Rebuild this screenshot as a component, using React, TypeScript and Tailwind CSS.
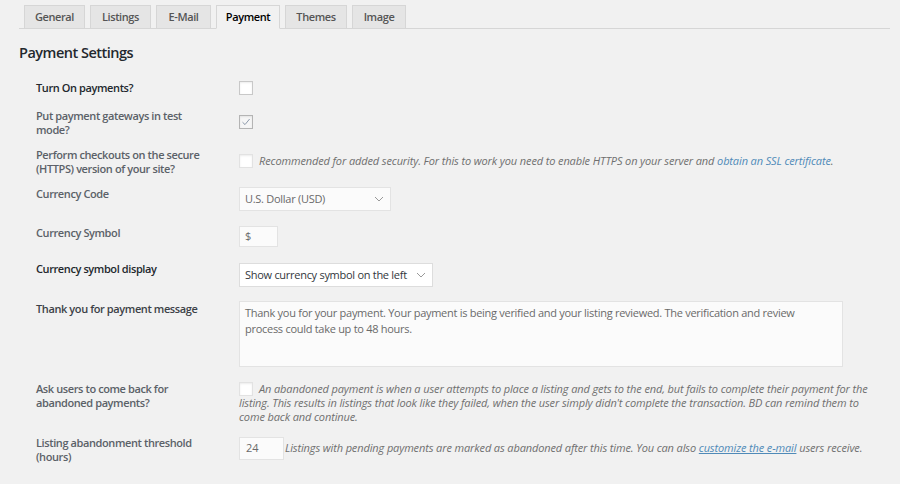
import React from "react";

const tabs = [
  { name: "General", w: "w-[61px]" },
  { name: "Listings", w: "w-[61px]" },
  { name: "E-Mail", w: "w-[55px]" },
  { name: "Payment", w: "w-[64px]" },
  { name: "Themes", w: "w-[62px]" },
  { name: "Image", w: "w-[54px]" },
];

function Checkbox({ checked = false, faded = false }: { checked?: boolean; faded?: boolean }) {
  return (
    <span
      className={`flex h-[14px] w-[14px] shrink-0 items-center justify-center border shadow-[inset_0_1px_2px_rgba(0,0,0,0.08)] ${
        checked ? "border-[#b4b4b4] bg-[#f6f6f6]" : faded ? "border-[#e2e2e2] bg-white" : "border-[#c8c8c8] bg-white"
      }`}
    >
      {checked && (
        <svg width="10" height="10" viewBox="0 0 10 10">
          <path d="M1.5 5.2 L4 7.6 L8.6 2" fill="none" stroke="#8d9aab" strokeWidth="1" />
        </svg>
      )}
    </span>
  );
}

function Chevron() {
  return (
    <svg width="10" height="6" viewBox="0 0 10 6" className="shrink-0">
      <path d="M1 1 L5 5 L9 1" fill="none" stroke="#999" strokeWidth="1" />
    </svg>
  );
}

function Label({ children, dark = false }: { children: React.ReactNode; dark?: boolean }) {
  return (
    <div
      className={`w-[203px] shrink-0 pr-2 text-[11px] font-semibold leading-[14px] tracking-[-0.4px] ${
        dark ? "text-[#23282d]" : "text-[#5b6168]"
      }`}
    >
      {children}
    </div>
  );
}

export default function App() {
  return (
    <div
      className="h-[484px] w-[900px] overflow-hidden bg-[#f1f1f1] text-[11px]"
      style={{ fontFamily: '"Open Sans", "Noto Sans", sans-serif' }}
    >
      {/* tabs */}
      <div className="ml-[19px] mr-[10px] flex gap-[5px] border-b border-[#d6d6d6] pl-[5px] pt-[5px]">
        {tabs.map((t) => {
          const active = t.name === "Payment";
          return (
            <div
              key={t.name}
              className={`-mb-px flex h-[24px] items-center justify-center border border-[#d6d6d6] text-[11px] font-semibold tracking-[-0.4px] ${t.w} ${
                active ? "border-b-[#f1f1f1] bg-[#f1f1f1] text-[#000]" : "bg-[#e5e5e5] text-[#555]"
              }`}
            >
              {t.name}
            </div>
          );
        })}
      </div>

      <h2 className="ml-[19px] mt-[15px] text-[14.5px] font-semibold leading-[18px] tracking-[-0.5px] text-[#23282d]">
        Payment Settings
      </h2>

      <div className="ml-[36px] mt-[19px] flex flex-col">
        {/* Turn on payments */}
        <div className="flex h-[28px] items-start">
          <Label dark>Turn On payments?</Label>
          <Checkbox />
        </div>

        {/* test mode */}
        <div className="flex h-[39px] items-start">
          <Label>
            Put payment gateways in test
            <br />
            mode?
          </Label>
          <div className="mt-[6px]">
            <Checkbox checked />
          </div>
        </div>

        {/* https */}
        <div className="flex h-[39px] items-start">
          <Label>
            Perform checkouts on the secure
            <br />
            (HTTPS) version of your site?
          </Label>
          <div className="mt-[5px] flex items-center gap-[6px]">
            <Checkbox faded />
            <span className="italic tracking-[-0.12px] text-[#6f6f6f]">
              Recommended for added security. For this to work you need to enable HTTPS on your server and{" "}
              <span className="text-[#4f8ab8]">obtain an SSL certificate</span>.
            </span>
          </div>
        </div>

        {/* currency code */}
        <div className="flex h-[39px] items-start">
          <Label>Currency Code</Label>
          <div className="flex h-[24px] w-[152px] items-center justify-between border border-[#e3e3e3] bg-[#fbfbfb] pl-[5px] pr-[6px] tracking-[-0.28px] text-[#6a6a6a]">
            <span>U.S. Dollar (USD)</span>
            <Chevron />
          </div>
        </div>

        {/* currency symbol */}
        <div className="flex h-[36px] items-start">
          <Label>Currency Symbol</Label>
          <div className="flex h-[21px] w-[39px] items-center border border-[#e3e3e3] bg-[#fbfbfb] pl-[5px] text-[#6a6a6a]">
            $
          </div>
        </div>

        {/* currency symbol display */}
        <div className="flex h-[40px] items-start">
          <Label dark>Currency symbol display</Label>
          <div className="mt-px flex h-[24px] w-[194px] items-center justify-between border border-[#dddddd] bg-white pl-[5px] pr-[6px] tracking-[-0.28px] text-[#32373c]">
            <span>Show currency symbol on the left</span>
            <Chevron />
          </div>
        </div>

        {/* thank you message */}
        <div className="flex h-[80px] items-start">
          <Label dark>
            <span className="text-[#3c4147]">Thank you for payment message</span>
          </Label>
          <div className="-mt-px h-[66px] w-[604px] border border-[#e3e3e3] bg-[#fbfbfb] px-[5px] pt-[3px] leading-[16px] tracking-[-0.28px] text-[#6a6a6a]">
            Thank you for your payment. Your payment is being verified and your listing reviewed. The verification and review
            <br />
            process could take up to 48 hours.
          </div>
        </div>

        {/* abandoned */}
        <div className="flex h-[54px] items-start">
          <Label>
            Ask users to come back for
            <br />
            abandoned payments?
          </Label>
          <div className="w-[650px] whitespace-nowrap italic leading-[14px] tracking-[-0.12px] text-[#6f6f6f]">
            <span className="mr-[6px] inline-block align-[-3px]">
              <Checkbox faded />
            </span>
            An abandoned payment is when a user attempts to place a listing and gets to the end, but fails to complete their payment for the
            <br />
            listing. This results in listings that look like they failed, when the user simply didn't complete the transaction. BD can remind them to
            <br />
            come back and continue.
          </div>
        </div>

        {/* threshold */}
        <div className="flex items-start">
          <Label>
            Listing abandonment threshold
            <br />
            (hours)
          </Label>
          <div className="mt-px flex items-center">
            <div className="flex h-[23px] w-[45px] items-center border border-[#e3e3e3] bg-[#fbfbfb] pl-[6px] text-[#6a6a6a]">
              24
            </div>
            <span className="ml-[1px] italic tracking-[-0.12px] text-[#6f6f6f]">
              Listings with pending payments are marked as abandoned after this time. You can also{" "}
              <span className="text-[#4f8ab8] underline">customize the e-mail</span> users receive.
            </span>
          </div>
        </div>
      </div>
    </div>
  );
}
